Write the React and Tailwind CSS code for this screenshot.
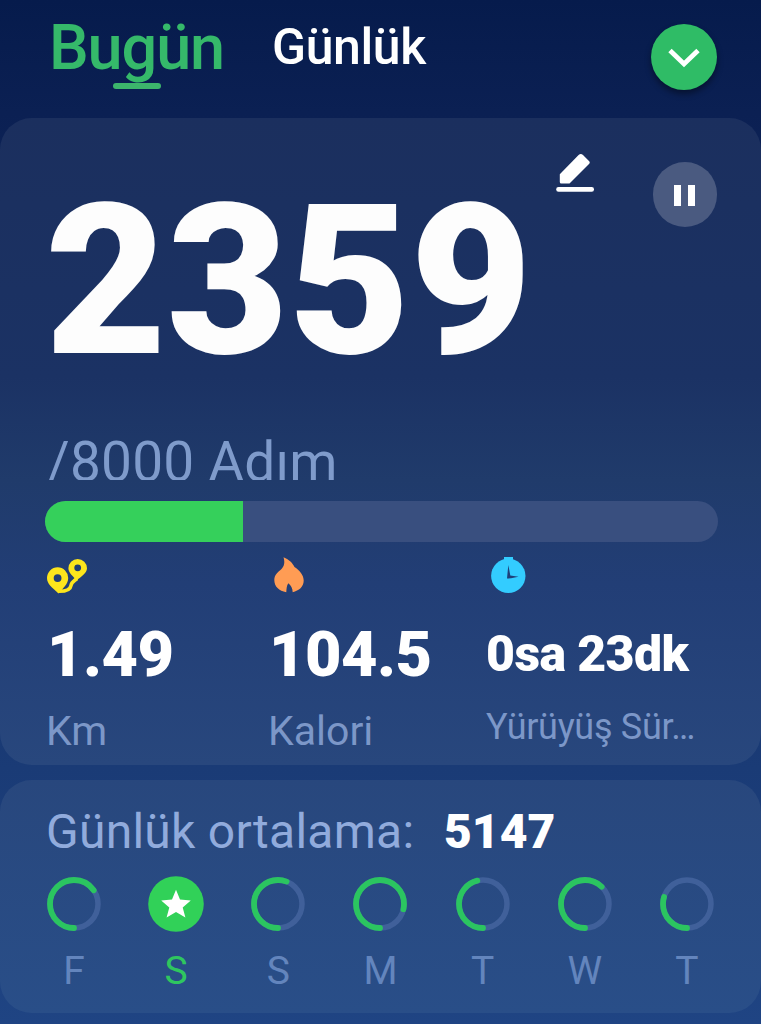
const days = [
  { label: "F", sweep: 235 },
  { label: "S", done: true },
  { label: "S", sweep: 201 },
  { label: "M", sweep: 283 },
  { label: "T", sweep: 166 },
  { label: "W", sweep: 224 },
  { label: "T", sweep: 107 },
];

const steps = 2359;
const goal = 8000;

function RouteIcon() {
  return (
    <svg className="ml-[2px] block" width="41" height="37" viewBox="0 0 41 37">
      <path
        d="M11 34.300C19 34.500 23.500 32.500 24 28.500C24.500 25 27 24 30 21.500"
        fill="none"
        stroke="#fde51c"
        strokeWidth="3.600"
      />
      <path
        d="M10.600 10.300A10.600 10.600 0 0 0 0 20.900C0 27 5 30 11.500 36.500C16 31 21.200 27 21.200 20.900A10.600 10.600 0 0 0 10.600 10.300ZM10.600 17.200A3.900 3.900 0 1 1 10.600 25A3.900 3.900 0 1 1 10.600 17.200Z"
        fill="#fde51c"
        fillRule="evenodd"
      />
      <path
        d="M30.700 2A9.300 9.300 0 0 0 21.400 11.300C21.400 16 26 19 29.500 23.500C34 20 40 16 40 11.300A9.300 9.300 0 0 0 30.700 2ZM30.700 7.400A3.400 3.400 0 1 1 30.700 14.200A3.400 3.400 0 1 1 30.700 7.400Z"
        fill="#fde51c"
        fillRule="evenodd"
      />
    </svg>
  );
}

function FlameIcon() {
  return (
    <svg className="ml-[7px] block" width="30" height="37" viewBox="0 0 30 37">
      <path
        d="M9.500 0.300C15.500 3 18.500 6 20.500 10C25.500 13.500 29.700 18 29.700 23.500C29.700 30 25 33.500 18.700 35.200C18.500 31 17 28.500 14.300 26.300C12.500 29 12.600 32 12.300 35.200C5 34 0.300 29.500 0.300 23C0.300 18 4 15 7.500 12C10.500 9 11 5 9.500 0.300Z"
        fill="#ff9c54"
      />
    </svg>
  );
}

function ClockIcon() {
  return (
    <svg className="ml-[6px] block" width="35" height="37" viewBox="0 0 35 37">
      <rect x="13" y="0" width="9" height="7" fill="#33ccff" />
      <circle cx="17.300" cy="18.800" r="17.200" fill="#33ccff" />
      <path d="M17.300 8L19.300 18.500L27.500 19.800L20 21.300L16 21.600Z" fill="#1f3f78" />
    </svg>
  );
}

function DayRing({ sweep, done }) {
  if (done) {
    return (
      <svg className="block" width="56" height="56" viewBox="0 0 56 56">
        <circle cx="28" cy="28" r="27.800" fill="#31d158" />
        <path
          d="M28 13.800L32 23.500L42.800 24.400L34.700 31.500L37.400 41.500L28 36L18.600 41.500L21.300 31.500L13.200 24.400L24 23.500Z"
          fill="#fff"
        />
      </svg>
    );
  }

  return (
    <svg className="block" width="56" height="56" viewBox="0 0 56 56">
      <circle cx="28" cy="28" r="24" fill="none" stroke="#40609a" strokeWidth="5.500" />
      <circle
        cx="28"
        cy="28"
        r="24"
        fill="none"
        pathLength="360"
        stroke="#2bc560"
        strokeDasharray={`${sweep} 360`}
        strokeLinecap="round"
        strokeWidth="5.800"
        transform="rotate(90 28 28)"
      />
    </svg>
  );
}

function Header() {
  return (
    <header className="flex h-[118px] items-start pr-[44px] pl-[48px]">
      <button className="mt-[16px] flex w-[177px] flex-col items-center" type="button">
        <span className="text-[63px] leading-[64px] font-medium tracking-[-1.1px] text-[#35b96a]">
          Bugün
        </span>
        <span className="mt-[3px] h-[6px] w-[48px] rounded-full bg-[#3cb56c]" />
      </button>
      <button
        className="mt-[19px] ml-[47px] text-[50px] leading-[56px] font-medium tracking-[-0.4px] text-white"
        type="button"
      >
        Günlük
      </button>
      <button
        aria-label="Menü"
        className="mt-[24px] ml-auto grid h-[66px] w-[66px] place-items-center rounded-full bg-[#2fbc66] shadow-[0_4px_6px_rgba(0,0,0,0.4)]"
        type="button"
      >
        <svg className="mt-[2px]" width="32" height="20" viewBox="0 0 32 20">
          <path d="M2 2.500L16 16L30 2.500" fill="none" stroke="#fff" strokeWidth="4.800" />
        </svg>
      </button>
    </header>
  );
}

function Stat({ icon, value, label, small }) {
  return (
    <div>
      {icon}
      <div
        className={
          small
            ? "mt-[22px] ml-[1px] h-[76px] text-[50px] leading-[76px] font-black tracking-[-0.6px] whitespace-nowrap text-white"
            : "mt-[23px] ml-[2px] h-[76px] text-[63px] leading-[76px] font-black tracking-[-0.5px] whitespace-nowrap text-white"
        }
      >
        {value}
      </div>
      <div
        className={
          small
            ? "mt-[11px] ml-[1px] text-[36px] leading-[48px] tracking-[-0.3px] whitespace-nowrap text-[#7c97c8]"
            : "mt-[14px] ml-[1px] text-[41px] leading-[48px] whitespace-nowrap text-[#7c97c8]"
        }
      >
        {label}
      </div>
    </div>
  );
}

function StepsCard() {
  return (
    <section className="h-[647px] rounded-[32px] bg-[linear-gradient(180deg,#1b2f5e_0%,#1b3264_40%,#203b6b_56%,#223e76_72%,#28477d_100%)] pr-[43px] pl-[45px]">
      <div className="flex items-start">
        <div className="mt-[58px] w-[484px] text-[210px] leading-[210px] font-black text-[#fdfdfd]">
          {steps}
        </div>
        <button aria-label="Düzenle" className="mt-[35px] ml-[27px]" type="button">
          <svg className="block" width="38" height="39" viewBox="0 0 38 39">
            <path
              d="M3.800 21.300L22.600 2Q24.800 -0.100 27 2L33 7.900Q34.500 9.500 33 11L13.500 30.600H5.300Q3.800 30.600 3.800 29.100Z"
              fill="#fff"
            />
            <rect x="0.200" y="34" width="37.800" height="4.700" rx="2.300" fill="#fff" />
          </svg>
        </button>
        <button
          aria-label="Duraklat"
          className="mt-[44px] mr-[1px] ml-auto flex h-[65px] w-[64px] items-center justify-center gap-[7px] rounded-full bg-[#4a5a80] pr-[1px]"
          type="button"
        >
          <span className="mt-[2px] h-[21px] w-[7px] bg-white" />
          <span className="mt-[2px] h-[21px] w-[7px] bg-white" />
        </button>
      </div>

      <div className="mt-[44px] ml-[2px] h-[50px] overflow-hidden text-[55px] leading-[65px] tracking-[0.2px] text-[#7f9bcb]">
        /{goal} Adım
      </div>

      <div className="mt-[21px] h-[41px] overflow-hidden rounded-full bg-[#394f7f]">
        <div className="h-full bg-[#35d05b]" style={{ width: `${(steps / goal) * 100}%` }} />
      </div>

      <div className="mt-[15px] grid grid-cols-[222px_218px_1fr]">
        <Stat icon={<RouteIcon />} label="Km" value="1.49" />
        <Stat icon={<FlameIcon />} label="Kalori" value="104.5" />
        <Stat icon={<ClockIcon />} label="Yürüyüş Sür…" small value="0sa 23dk" />
      </div>
    </section>
  );
}

function AverageCard() {
  return (
    <section className="mt-[15px] h-[233px] rounded-[32px] bg-[linear-gradient(180deg,#28477d_0%,#294e88_100%)] px-[46px]">
      <div className="flex items-baseline pt-[23px] leading-[58px]">
        <span className="w-[398px] text-[48px] tracking-[0.25px] text-[#91abdc]">
          Günlük ortalama:
        </span>
        <span className="text-[48px] font-black text-white">5147</span>
      </div>
      <div className="mt-[15px] flex justify-between">
        {days.map((day, index) => (
          <div className="flex w-[56px] flex-col items-center" key={index}>
            <DayRing done={day.done} sweep={day.sweep} />
            <span
              className={`mt-[15px] text-[39px] leading-[48px] ${
                day.done ? "text-[#2fc65f]" : "text-[#6385bd]"
              }`}
            >
              {day.label}
            </span>
          </div>
        ))}
      </div>
    </section>
  );
}

export default function App() {
  return (
    <main className="h-[1024px] w-[761px] overflow-hidden bg-[linear-gradient(180deg,#061b4c_0%,#0b2053_11%,#1a3b76_75%,#1f4483_100%)] font-['Roboto',sans-serif]">
      <Header />
      <StepsCard />
      <AverageCard />
    </main>
  );
}
